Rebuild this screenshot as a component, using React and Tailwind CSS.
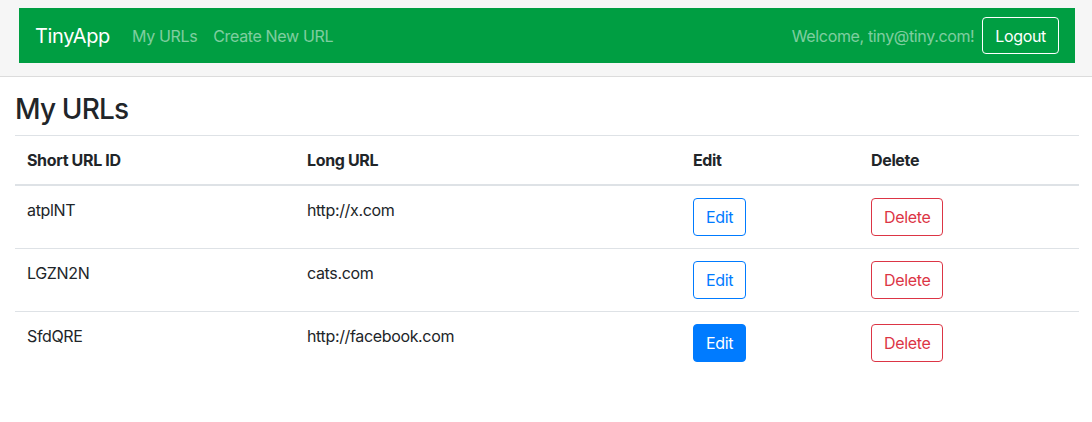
const urls = [
  { id: 'atplNT', longURL: 'http://x.com' },
  { id: 'LGZN2N', longURL: 'cats.com' },
  { id: 'SfdQRE', longURL: 'http://facebook.com', active: true }
]

export default function App() {
  return (
    <div className="min-h-[422px] bg-white text-[#212529] text-base tracking-[-0.022em]" style={{ fontFamily: 'Inter, "Noto Sans", sans-serif' }}>
      <header className="bg-[#f6f6f6] border-b border-[#dcdcdc] pt-2 pb-[13px] pl-[19px] pr-[17px]">
        <nav className="bg-[#009e42] h-[55px] flex items-center pl-4 pr-4">
          <a className="text-white text-xl mr-[22px]">TinyApp</a>
          <a className="text-white/50 mr-4">My URLs</a>
          <a className="text-white/50">Create New URL</a>
          <div className="ml-auto flex items-center gap-2">
            <span className="text-white/50">Welcome, tiny@tiny.com!</span>
            <button className="border border-white rounded text-white px-3 h-[37px]">Logout</button>
          </div>
        </nav>
      </header>

      <main className="px-[15px] pr-[13px] pt-4">
        <h3 className="text-[28px] leading-[1.2] font-medium mb-2 tracking-[-0.03em]">My URLs</h3>
        <table className="w-full border-collapse">
          <thead>
            <tr className="border-t border-[#dee2e6] border-b-2">
              <th className="text-left font-bold p-3 w-[280px]">Short URL ID</th>
              <th className="text-left font-bold p-3 w-[386px]">Long URL</th>
              <th className="text-left font-bold p-3 w-[178px]">Edit</th>
              <th className="text-left font-bold p-3">Delete</th>
            </tr>
          </thead>
          <tbody>
            {urls.map(url => (
              <tr key={url.id} className="border-t border-[#dee2e6]">
                <td className="p-3 align-top">{url.id}</td>
                <td className="p-3 align-top">{url.longURL}</td>
                <td className="p-3 align-top">
                  <button
                    className={url.active
                      ? 'h-[38px] px-3 rounded border border-[#007bff] bg-[#007bff] text-white'
                      : 'h-[38px] px-3 rounded border border-[#007bff] text-[#007bff]'}
                  >
                    Edit
                  </button>
                </td>
                <td className="p-3 align-top">
                  <button className="h-[38px] px-3 rounded border border-[#dc3545] text-[#dc3545]">Delete</button>
                </td>
              </tr>
            ))}
          </tbody>
        </table>
      </main>
    </div>
  )
}
